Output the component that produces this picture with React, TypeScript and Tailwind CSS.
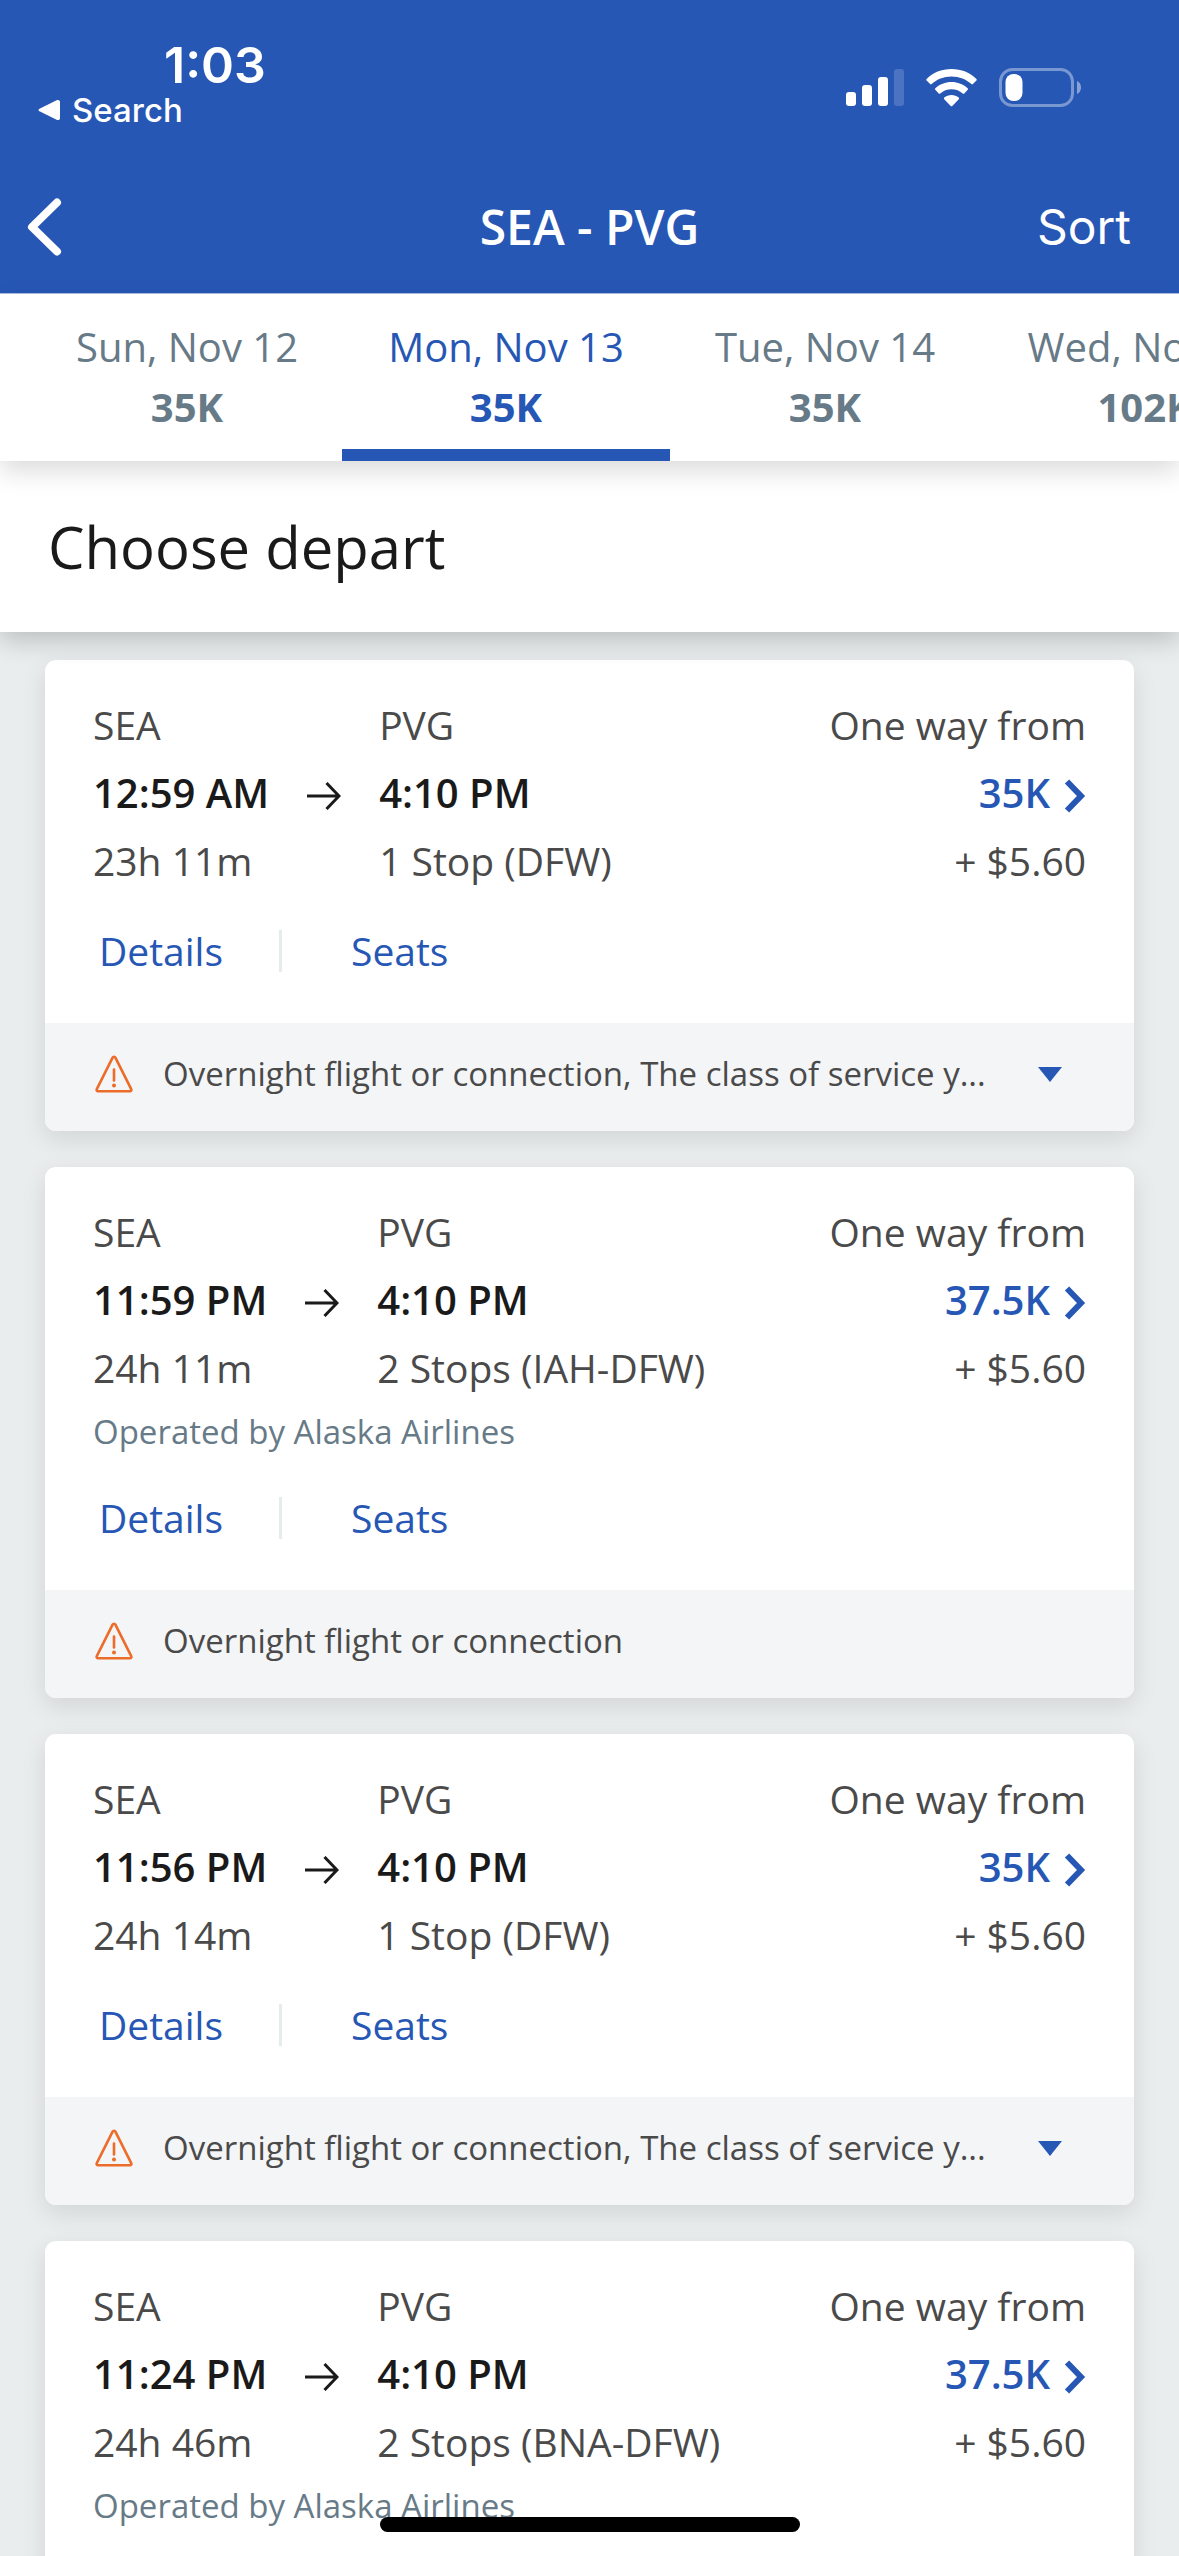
type Flight = {
  departTime: string;
  arriveTime: string;
  duration: string;
  stops: string;
  price: string;
  operatedBy?: string;
  notice?: string;
  expandable?: boolean;
};

const dates = [
  { day: 'Sun, Nov 12', price: '35K', width: 'w-[310px]' },
  { day: 'Mon, Nov 13', price: '35K', width: 'w-[328px]', active: true },
  { day: 'Tue, Nov 14', price: '35K', width: 'w-[310px]' },
  { day: 'Wed, Nov 15', price: '102K', width: 'w-[330px]' },
];

const flights: Flight[] = [
  {
    departTime: '12:59 AM',
    arriveTime: '4:10 PM',
    duration: '23h 11m',
    stops: '1 Stop (DFW)',
    price: '35K',
    notice: 'Overnight flight or connection, The class of service y...',
    expandable: true,
  },
  {
    departTime: '11:59 PM',
    arriveTime: '4:10 PM',
    duration: '24h 11m',
    stops: '2 Stops (IAH-DFW)',
    price: '37.5K',
    operatedBy: 'Operated by Alaska Airlines',
    notice: 'Overnight flight or connection',
  },
  {
    departTime: '11:56 PM',
    arriveTime: '4:10 PM',
    duration: '24h 14m',
    stops: '1 Stop (DFW)',
    price: '35K',
    notice: 'Overnight flight or connection, The class of service y...',
    expandable: true,
  },
  {
    departTime: '11:24 PM',
    arriveTime: '4:10 PM',
    duration: '24h 46m',
    stops: '2 Stops (BNA-DFW)',
    price: '37.5K',
    operatedBy: 'Operated by Alaska Airlines',
  },
];

function StatusBar() {
  return (
    <div className="flex justify-between h-[161px] font-['Inter',sans-serif]">
      <div className="pt-[37px]">
        <div className="pl-[164px] text-[50px] leading-[56px] font-semibold">1:03</div>
        <a href="#" className="flex items-center gap-[12px] pl-[38px] text-[33px] leading-[34px] font-medium">
          <svg width="22" height="22" viewBox="0 0 22 22" fill="#fff">
            <path d="M2 9.4 18.6 1.2C20.4.4 22 1.2 22 3v16c0 1.8-1.6 2.6-3.4 1.8L2 12.6C0 11.6 0 10.4 2 9.4z" />
          </svg>
          Search
        </a>
      </div>
      <svg className="mt-[67px] mr-[97px]" width="236" height="41" viewBox="0 0 236 41" fill="#fff">
        <rect x="0" y="25" width="10" height="14" rx="3" />
        <rect x="16" y="18" width="10" height="21" rx="3" />
        <rect x="32" y="10" width="10" height="29" rx="3" />
        <rect x="48" y="2" width="10" height="37" rx="3" fillOpacity="0.17" />
        {/* wifi */}
        <path d="M105.500 2C95.700 2 86.800 5.700 80.600 11.900c-.5.500-.5 1.200 0 1.700l3.500 3.500c.4.400 1.100.4 1.500 0C90.700 12.300 97.700 9.500 105.500 9.500s14.800 2.800 19.900 7.600c.4.400 1.100.4 1.500 0l3.500-3.500c.5-.5.5-1.200 0-1.700C124.200 5.700 115.300 2 105.500 2z" />
        <path d="M105.500 15c-6.200 0-11.900 2.300-16.100 6.200-.5.400-.5 1.100-.1 1.600l3.400 3.600c.4.400 1.100.4 1.600 0 3-2.600 6.900-4.200 11.200-4.200s8.200 1.600 11.200 4.200c.5.400 1.200.4 1.600 0l3.400-3.600c.4-.5.4-1.200-.1-1.600C117.400 17.300 111.700 15 105.500 15z" />
        <path d="M105.500 28c-2.800 0-5.300 1-7.200 2.600-.5.400-.5 1.100-.1 1.600l6.500 6.700c.4.400 1.100.4 1.600 0l6.500-6.700c.4-.5.4-1.200-.1-1.600C110.800 29 108.300 28 105.500 28z" />
        {/* battery */}
        <rect x="154.500" y="2.500" width="72" height="36" rx="12" fill="none" stroke="#fff" strokeOpacity="0.38" strokeWidth="3" />
        <rect x="159.500" y="7" width="17" height="27" rx="8" />
        <path d="M231 14c2.600 1.200 4 3.600 4 6.500s-1.400 5.300-4 6.500z" fillOpacity="0.45" />
      </svg>
    </div>
  );
}

function NavBar() {
  return (
    <div className="grid grid-cols-[1fr_auto_1fr] items-center h-[132px] pl-[26px] pr-[48px]">
      <button type="button" aria-label="Back" className="justify-self-start">
        <svg width="38" height="60" viewBox="0 0 38 60" fill="none" stroke="#fff" strokeWidth="8" strokeLinecap="round" strokeLinejoin="round">
          <path d="M31 5.500 6 30l25 24.500" />
        </svg>
      </button>
      <h1 className="pl-[22px] text-[48px] leading-[60px] font-semibold">SEA - PVG</h1>
      <button type="button" className="justify-self-end font-['Inter',sans-serif] text-[48px] leading-[60px]">Sort</button>
    </div>
  );
}

function DateTabs() {
  return (
    <nav className="relative z-20 flex overflow-x-clip bg-white pl-[32px] border-t border-[#a9bbdd] shadow-[0_10px_24px_rgba(0,0,0,0.14)]">
      {dates.map((d) => (
        <button
          key={d.day}
          type="button"
          className={`${d.width} shrink-0 pt-[23px] pb-[12px] border-b-[12px] text-[40px] leading-[60px] whitespace-nowrap ${
            d.active ? 'border-[#2757b5] text-[#2757b5]' : 'border-transparent text-[#677a87]'
          }`}
        >
          <span className="block">{d.day}</span>
          <span className="block font-bold">{d.price}</span>
        </button>
      ))}
    </nav>
  );
}

function WarningIcon() {
  return (
    <svg className="shrink-0" width="38" height="38" viewBox="0 0 38 38" fill="none" stroke="#ec6c29" strokeWidth="2.600" strokeLinecap="round" strokeLinejoin="round">
      <path d="M17.600 2.600 1.800 34.200c-.5 1.100.1 2 1.200 2h32c1.100 0 1.700-.9 1.200-2L20.400 2.600c-.6-1.200-2.200-1.200-2.800 0z" />
      <path d="M19 14.500v11" />
      <circle cx="19" cy="30.500" r="2" fill="#ec6c29" stroke="none" />
    </svg>
  );
}

function FlightCard({ flight }: { flight: Flight }) {
  return (
    <article className="shrink-0 rounded-[11px] bg-white overflow-hidden shadow-[0_8px_24px_rgba(0,0,0,0.10)]">
      <div className="pt-[31px] pb-[38px] px-[48px]">
        <div className="flex justify-between text-[39px] leading-[68px] text-[#4a4a4a]">
          <div className="grid grid-cols-[auto_auto_auto] items-center">
            <span>SEA</span>
            <span />
            <span>PVG</span>
            <span className="text-[40px] font-semibold text-[#1a1a1a]">{flight.departTime}</span>
            <svg className="mx-[38px] mt-[6px]" width="34" height="28" viewBox="0 0 34 28" fill="none" stroke="#1a1a1a" strokeWidth="3">
              <path d="M0 14h32M19.500 1 32 14 19.500 27" />
            </svg>
            <span className="text-[40px] font-semibold text-[#1a1a1a]">{flight.arriveTime}</span>
            <span>{flight.duration}</span>
            <span />
            <span>{flight.stops}</span>
          </div>
          <div className="flex flex-col items-end">
            <span>One way from</span>
            <a href="#" className="flex items-center gap-[14px] text-[40px] font-semibold text-[#2757b5]">
              {flight.price}
              <svg className="mt-[6px]" width="22" height="34" viewBox="0 0 22 34" fill="none" stroke="#2757b5" strokeWidth="6">
                <path d="M3 2.500 17 17 3 31.500" />
              </svg>
            </a>
            <span>+ $5.60</span>
          </div>
        </div>
        {flight.operatedBy && (
          <p className="text-[33px] leading-[60px] text-[#677a87]">{flight.operatedBy}</p>
        )}
        {flight.notice && (
          <div className="flex items-center mt-[22px] text-[39px] leading-[68px] text-[#2757b5]">
            <button type="button" className="w-[186px] pl-[6px] text-left">Details</button>
            <span className="w-[3px] h-[42px] bg-[#e6ecec]" />
            <button type="button" className="pl-[69px]">Seats</button>
          </div>
        )}
      </div>
      {flight.notice && (
        <div className="flex items-center h-[108px] pl-[50px] pr-[72px] pb-[6px] bg-[#f4f5f7]">
          <WarningIcon />
          <p className="flex-1 pl-[30px] text-[33px] leading-[60px] text-[#4a4a4a] whitespace-nowrap">{flight.notice}</p>
          {flight.expandable && (
            <button type="button" aria-label="Show all notices">
              <svg width="24" height="15" viewBox="0 0 24 15" fill="#2757b5">
                <path d="M0 0h24L12 15z" />
              </svg>
            </button>
          )}
        </div>
      )}
    </article>
  );
}

export default function App() {
  return (
    <div className="relative flex flex-col h-screen overflow-hidden bg-[#e9edee] font-['Open_Sans',sans-serif]">
      <header className="bg-[#2757b5] text-white">
        <StatusBar />
        <NavBar />
      </header>
      <DateTabs />
      <div className="relative z-10 bg-white px-[48px] py-[46px] shadow-[0_8px_24px_rgba(0,0,0,0.20)]">
        <h2 className="text-[58px] leading-[79px] text-[#1a1a1a]">Choose depart</h2>
      </div>
      <main className="flex flex-col flex-1 min-h-0 overflow-hidden gap-[36px] px-[45px] pt-[28px]">
        {flights.map((flight) => (
          <FlightCard key={flight.departTime} flight={flight} />
        ))}
      </main>
      {/* Home indicator */}
      <div className="absolute z-30 bottom-[24px] left-1/2 -translate-x-1/2 w-[420px] h-[15px] rounded-full bg-black" />
    </div>
  );
}
